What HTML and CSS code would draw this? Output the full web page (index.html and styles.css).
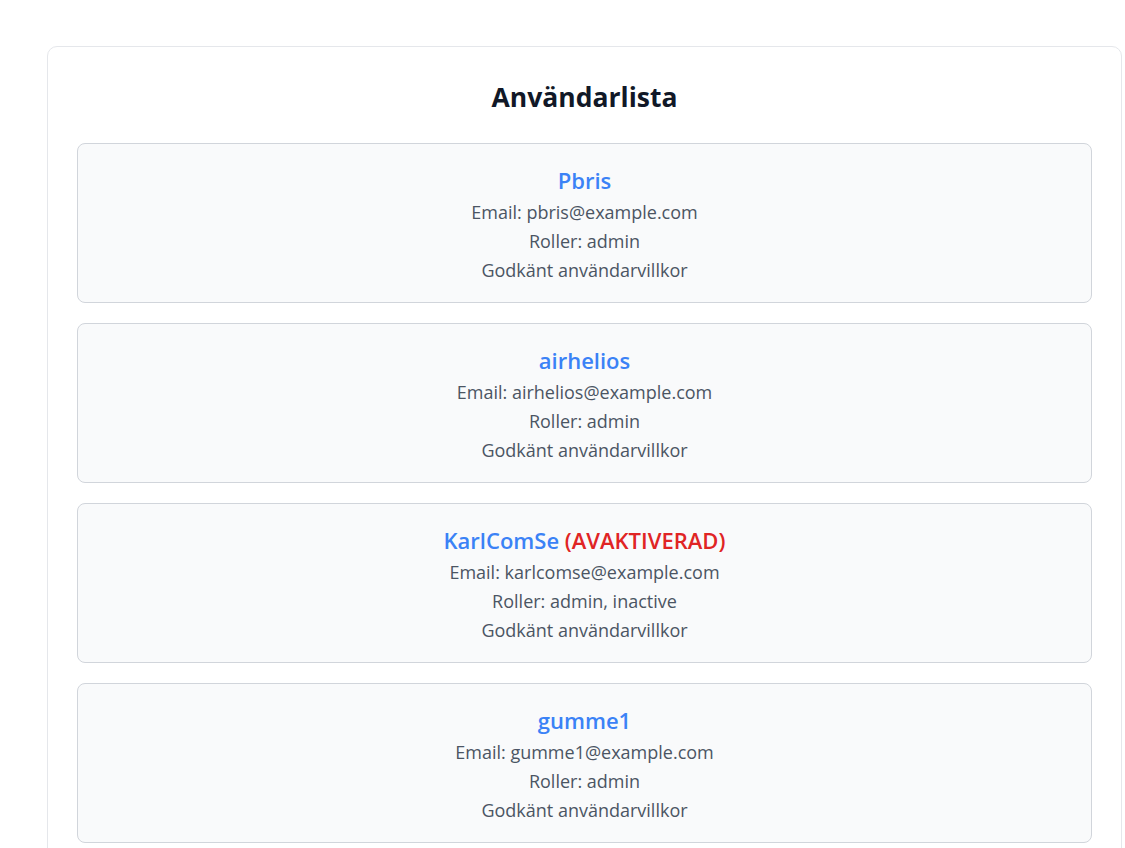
FILE: index.html
```html
<!DOCTYPE html>
<html lang="sv">
<head>
<meta charset="utf-8">
<title>Användarlista</title>
<link rel="stylesheet" href="styles.css">
</head>
<body>
<main class="panel">
  <h1 class="title">Användarlista</h1>
  <ul class="user-list">
    <li class="user-card">
      <div class="user-name">Pbris</div>
      <div class="user-line">Email: pbris@example.com</div>
      <div class="user-line">Roller: admin</div>
      <div class="user-line">Godkänt användarvillkor</div>
    </li>
    <li class="user-card">
      <div class="user-name">airhelios</div>
      <div class="user-line">Email: airhelios@example.com</div>
      <div class="user-line">Roller: admin</div>
      <div class="user-line">Godkänt användarvillkor</div>
    </li>
    <li class="user-card">
      <div class="user-name">KarlComSe <span class="inactive">(AVAKTIVERAD)</span></div>
      <div class="user-line">Email: karlcomse@example.com</div>
      <div class="user-line">Roller: admin, inactive</div>
      <div class="user-line">Godkänt användarvillkor</div>
    </li>
    <li class="user-card">
      <div class="user-name">gumme1</div>
      <div class="user-line">Email: gumme1@example.com</div>
      <div class="user-line">Roller: admin</div>
      <div class="user-line">Godkänt användarvillkor</div>
    </li>
  </ul>
</main>
</body>
</html>
```
FILE: styles.css
```css
html, body {
  margin: 0;
  padding: 0;
  background: #ffffff;
}
body {
  font-family: "Open Sans", "Noto Sans", sans-serif;
  color: #4b5563;
  padding: 46px 4px 0 47px;
}
.panel {
  box-sizing: border-box;
  width: 1075px;
  border: 1px solid #e5e7eb;
  border-radius: 10px;
  padding: 28px 29px 40px;
  background: #ffffff;
}
.title {
  margin: 0 0 24px;
  text-align: center;
  font-size: 26.5px;
  line-height: 44px;
  font-weight: 700;
  color: #111827;
}
.user-list {
  list-style: none;
  margin: 0;
  padding: 0;
  display: flex;
  flex-direction: column;
  gap: 20px;
}
.user-card {
  border: 1px solid #d1d5db;
  border-radius: 8px;
  background: #f9fafb;
  padding: 20px 20px 18px;
  text-align: center;
}
.user-name {
  font-size: 22px;
  font-weight: 600;
  line-height: 33px;
  padding-bottom: 1px;
  color: #3b82f6;
}
.inactive {
  color: #e02424;
}
.user-line {
  font-size: 18px;
  line-height: 29px;
}
.user-line:last-child {
  line-height: 28px;
}
```
